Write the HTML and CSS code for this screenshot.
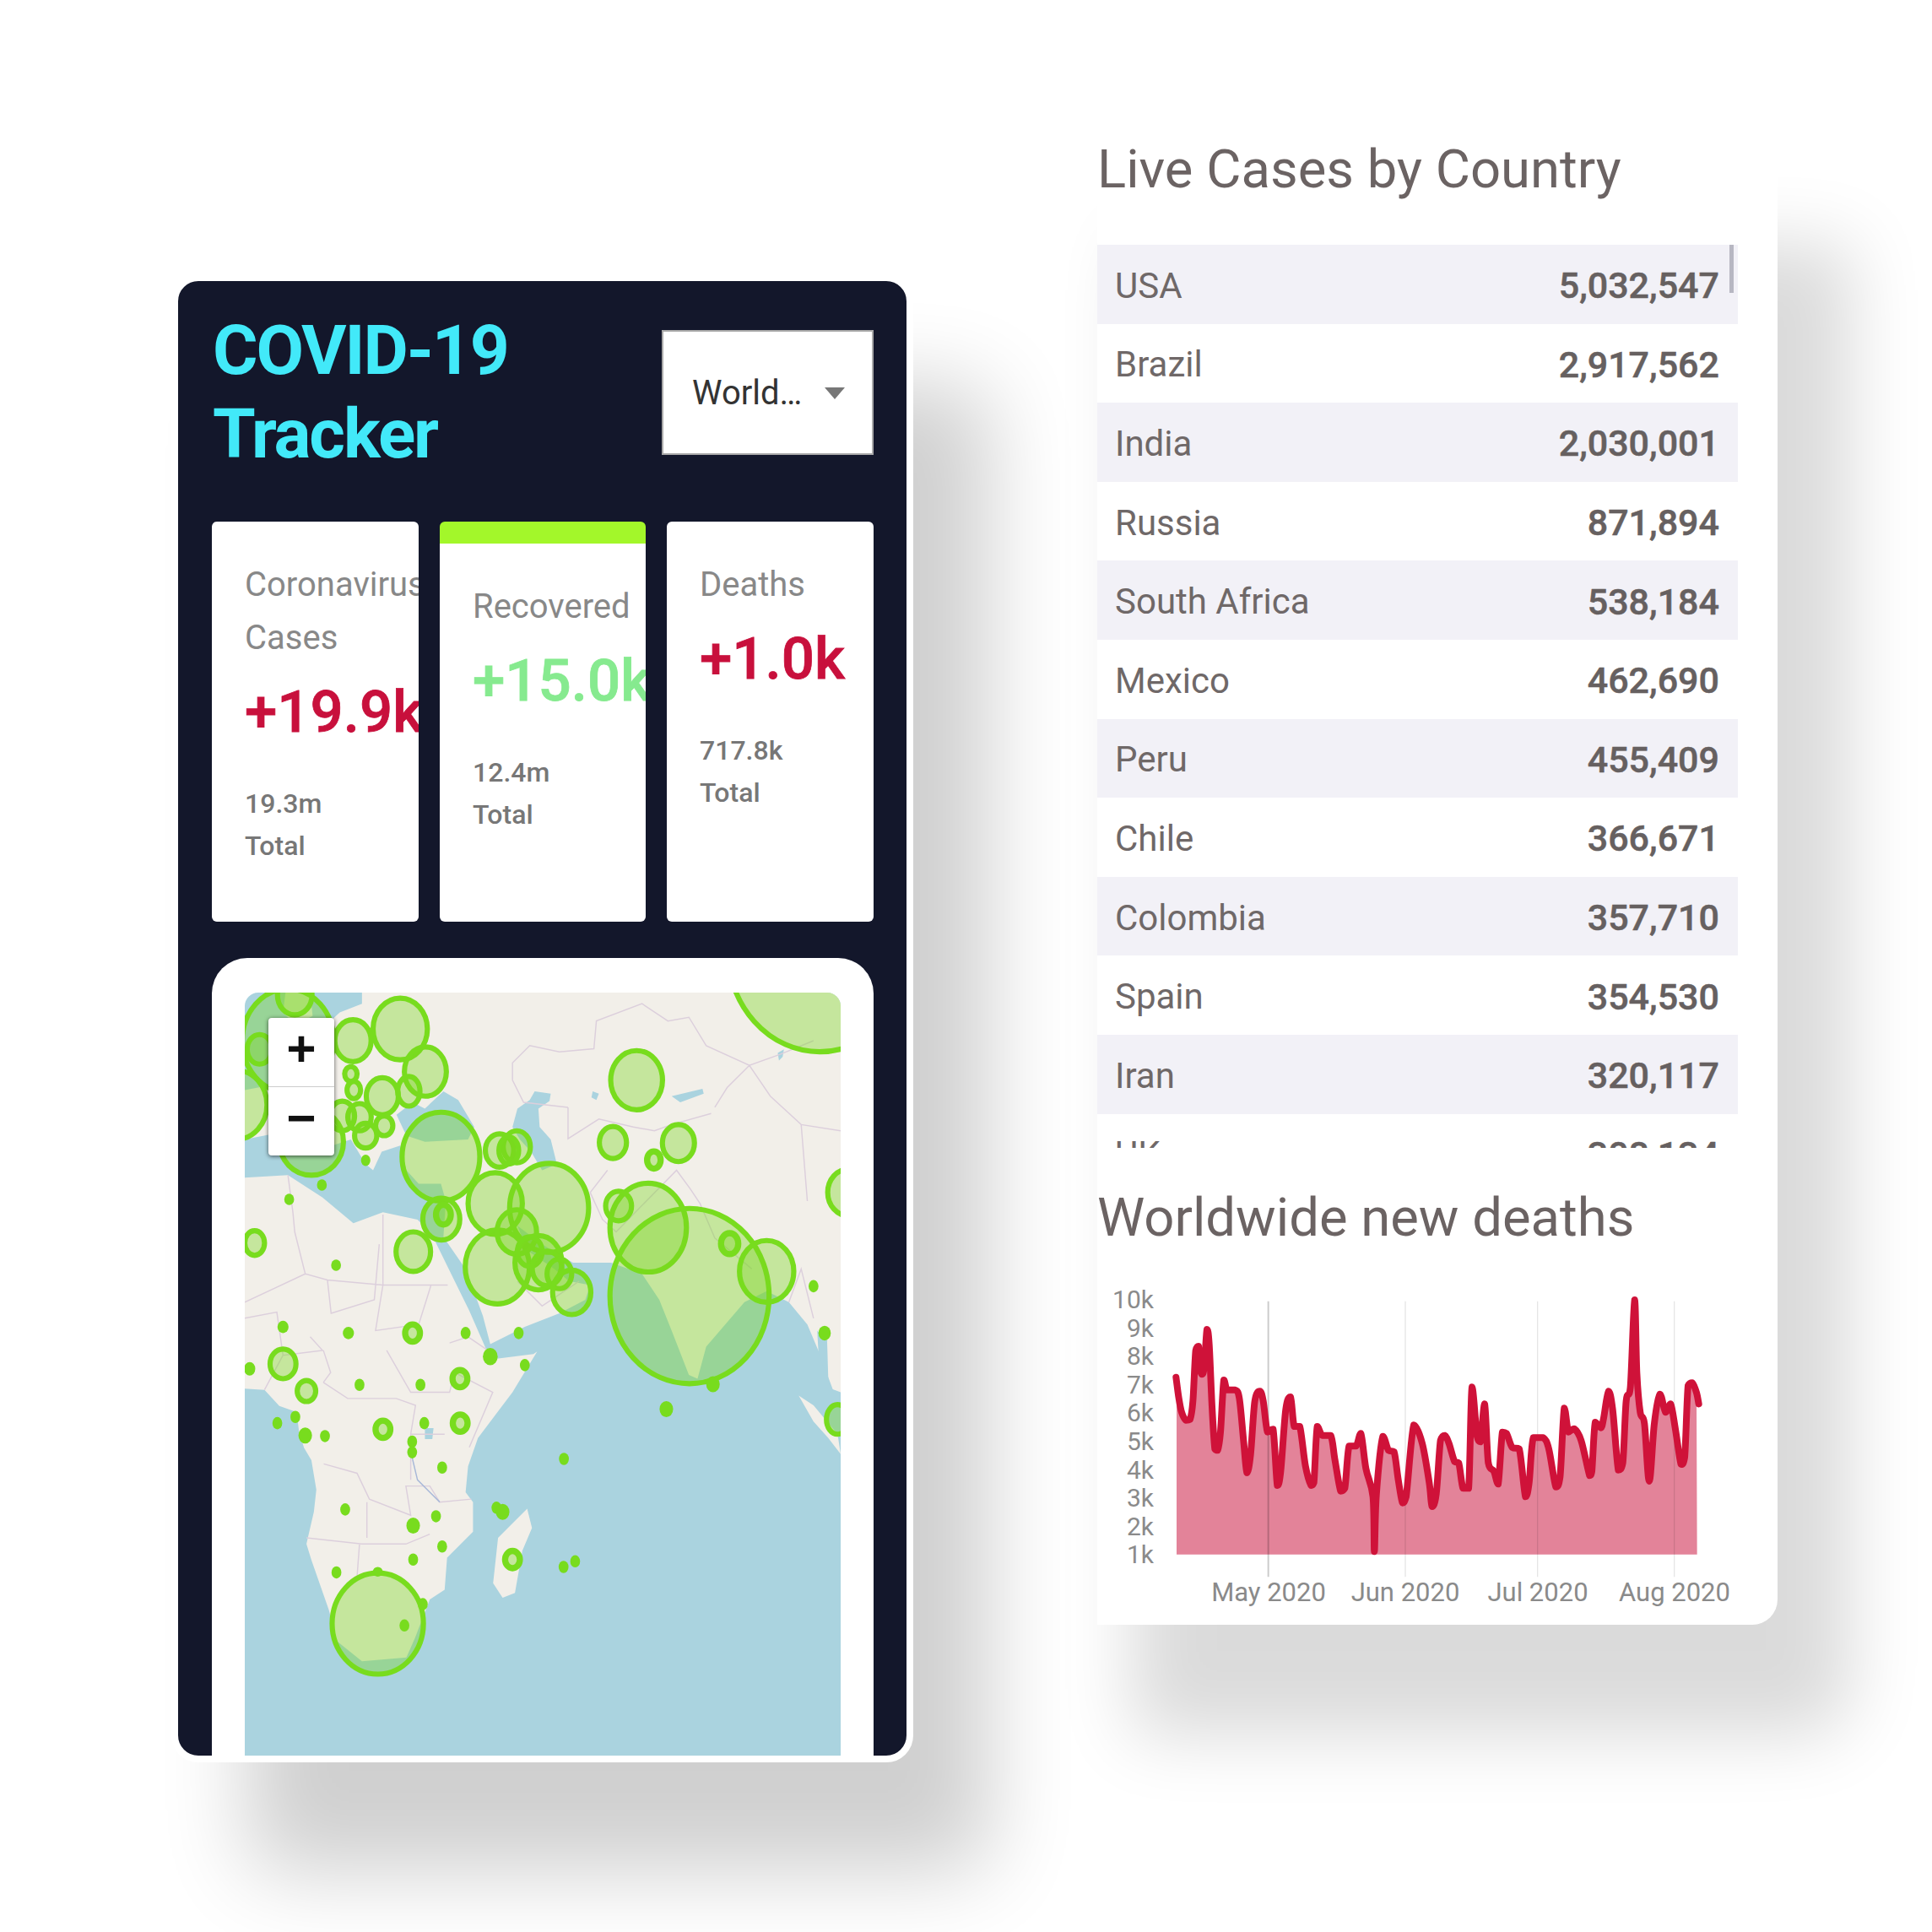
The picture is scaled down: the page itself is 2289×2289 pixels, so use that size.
FILE: index.html
```html
<!DOCTYPE html>
<html lang="en">
<head>
<meta charset="utf-8">
<title>COVID-19 Tracker</title>
<link rel="stylesheet" href="styles.css">
</head>
<body>
<main class="stage">
  <section class="tracker">
    <header class="tracker-head">
      <h1 class="brand">COVID-19<br>Tracker</h1>
      <div class="select"><span>World…</span><i class="caret"></i></div>
    </header>
    <div class="cards">
      <article class="card">
        <h3 class="card-label">Coronavirus Cases</h3>
        <p class="card-value red">+19.9k</p>
        <p class="card-total">19.3m<br>Total</p>
      </article>
      <article class="card active">
        <h3 class="card-label">Recovered</h3>
        <p class="card-value green">+15.0k</p>
        <p class="card-total">12.4m<br>Total</p>
      </article>
      <article class="card">
        <h3 class="card-label">Deaths</h3>
        <p class="card-value red">+1.0k</p>
        <p class="card-total">717.8k<br>Total</p>
      </article>
    </div>
    <div class="map-card">
      <div class="map">
        <svg class="map-svg" viewBox="199 806 483 618.5" preserveAspectRatio="none" xmlns="http://www.w3.org/2000/svg">
          <rect class="water" x="199" y="806" width="483" height="619"/>
          <path class="land" d="M294 806L682 806L682 1130L675.6 1127.5L663.8 1096L655 1075L640 1057L622 1048L604 1057L573 1093L566 1119L559 1116L545 1080L535 1055L521 1034L496 1025L465 1025L440 1010L420 995L428 1015L450 1030L462 1040L479 1043L475 1055L454 1066L426 1077L398 1091L392 1068L378 1030L360 1004L362 975L358 961L340 961L330 950L325 930L310 935L303 950L297 945L285 925L270 930L240 920L225 920L199 925L199 885L225 880L232 860L250 855L262 835L276 822L294 815Z"/>
          <path class="land" d="M232 806L252 806L254 825L240 832L230 822Z"/>
          <path class="land" d="M199 956L234 954L262 972L287 993L311 984L339 990L349 1000L353 1007L381 1064L395 1096L402 1103L433 1099L436 1097L416 1130L388 1167L380 1190L378 1211L384 1219L384 1243L363 1264L361 1290L349 1298L337 1329L330 1345L294 1348L274 1332L267 1306L253 1266L249 1253L255 1227L257 1209L253 1185L247 1175L243 1162L241 1146L227 1141L215 1128L199 1127Z"/>
          <path class="land" d="M427.9 1224.4L431.8 1240L424 1258.5L418 1292.6L408 1296.5L400.3 1284.7L404.3 1248L420 1232.3Z"/>
          <path class="land" d="M648 1132.7L660 1140.6L679.5 1164L682 1180L671.7 1166.8L660 1153.7Z"/>
          <path class="water" d="M345 900L360 886L372 893L385 915L380 925L345 927L330 922L322 905L335 895Z"/>
          <path class="water" d="M434 886L447 888L446 894L437 900L438 915L447 925L452 945L440 950L431 935L422 925L416 915L420 900L430 893Z"/>
          <path class="water" d="M663 1080L671 1088L672 1120L664 1098Z"/>
          <path class="water" d="M545 890L570 884L571 888L552 895ZM481 886L486 888L484 893L480 891ZM631 855L636 852L635 858L632 861ZM345 1159L352 1159L351 1168L345 1168Z"/>
          <path class="border" d="M416 877L416 863L430 849L454 854L482 851.5L484 829L521 815L542 829L559 826L573 849L608 865L633 856L660 845M608 865L590 883L580 899M608 865L625 890L650 913L682 918M461 899L461 924.5L486 908.5L514 915L531 918L545 913L577 904M416 877L425 895L461 899M493 950L479 968L489 990L500 1000L549 950L560 965L568 977L580 1005L610 1030M234 954L238 984L239.5 1000L248 1034L266 1039L311 1043L363.5 1043M311 986L311 1043M199 1057L248 1034M266 1039L269 1066L304 1055L308 1010M311 1043L305 1080L340 1075L350 1043M263 1188L290 1195.6L300 1216.6L333.5 1229.7L329.6 1206L349 1206L357 1219L382.6 1216.6M249 1248L294 1253L329.6 1253L349 1245M292 1253L290 1279.5M298 1219L298 1248M262.7 1122L282.4 1135L321.7 1135L337.4 1140.6L333.5 1164L333.5 1201M262.7 1096L268.6 1114L262.7 1122M314 1096L333.5 1130L365 1130L369 1114L400 1130L381 1174.6M333.5 1164L361 1164M199 1070L225 1065L230 1100L215 1128M230 1100L262 1096L252 1085M650 913L655 975M640 1057L650 1030L660 1070M396 1096L380 1085L365 1090M420 1040L440 1060L470 1040"/>
          <path class="river" d="M333.5 1178L339 1201L357 1219"/>
          <ellipse class="m" cx="665" cy="770" rx="75" ry="84"/>
          <ellipse class="m" cx="234" cy="845" rx="37" ry="42"/>
          <ellipse class="m" cx="192" cy="897" rx="25" ry="28"/>
          <ellipse class="m" cx="253" cy="927" rx="26" ry="27"/>
          <ellipse class="m" cx="239.5" cy="808" rx="14" ry="16"/>
          <ellipse class="m" cx="211" cy="852" rx="10" ry="12"/>
          <ellipse class="m" cx="516.6" cy="877" rx="21" ry="24"/>
          <ellipse class="m" cx="325" cy="835.5" rx="22" ry="25"/>
          <ellipse class="m" cx="286.7" cy="845" rx="14.7" ry="17"/>
          <ellipse class="m" cx="345.4" cy="870" rx="17" ry="20"/>
          <ellipse class="m" cx="310.5" cy="890" rx="13" ry="15"/>
          <ellipse class="m" cx="332" cy="886" rx="9" ry="12"/>
          <ellipse class="m" cx="285" cy="872" rx="5" ry="6"/>
          <ellipse class="m" cx="287.4" cy="885" rx="5.5" ry="7"/>
          <ellipse class="m" cx="292" cy="907" rx="9.5" ry="11"/>
          <ellipse class="m" cx="312" cy="914" rx="7" ry="8"/>
          <ellipse class="m" cx="297" cy="922" rx="9" ry="10"/>
          <ellipse class="m" cx="278" cy="906" rx="10" ry="12"/>
          <ellipse class="m" cx="358" cy="939" rx="31.5" ry="36"/>
          <ellipse class="m" cx="405.5" cy="934" rx="11.5" ry="13.5"/>
          <ellipse class="m" cx="419.5" cy="931" rx="11" ry="13"/>
          <ellipse class="m" cx="413" cy="934" rx="8" ry="11"/>
          <ellipse class="m" cx="550.5" cy="928" rx="13" ry="15"/>
          <ellipse class="m" cx="497.4" cy="927.5" rx="11" ry="13"/>
          <ellipse class="r" cx="530.6" cy="941.7" rx="5.5" ry="7"/>
          <ellipse class="m" cx="688.5" cy="968" rx="17" ry="19"/>
          <ellipse class="m" cx="445.7" cy="980.5" rx="32" ry="36"/>
          <ellipse class="m" cx="402" cy="977" rx="22" ry="25"/>
          <ellipse class="m" cx="358.3" cy="989.6" rx="15" ry="17"/>
          <ellipse class="r" cx="360" cy="986" rx="6" ry="8"/>
          <ellipse class="m" cx="403.7" cy="1028.4" rx="26" ry="30"/>
          <ellipse class="m" cx="419.5" cy="1000" rx="16" ry="18"/>
          <ellipse class="m" cx="437" cy="1025" rx="19" ry="22"/>
          <ellipse class="m" cx="430" cy="1016" rx="10" ry="12"/>
          <ellipse class="m" cx="444" cy="1029.6" rx="12" ry="14"/>
          <ellipse class="m" cx="454" cy="1034" rx="10" ry="12"/>
          <ellipse class="m" cx="464" cy="1049" rx="15.5" ry="18"/>
          <ellipse class="m" cx="335.6" cy="1016" rx="14" ry="16"/>
          <ellipse class="m" cx="207" cy="1009" rx="8" ry="10"/>
          <ellipse class="m" cx="526" cy="996.5" rx="31" ry="36"/>
          <ellipse class="m" cx="502" cy="979" rx="10.5" ry="12"/>
          <ellipse class="m" cx="559.5" cy="1052" rx="64.5" ry="71"/>
          <ellipse class="r" cx="592" cy="1009.5" rx="7" ry="8.5"/>
          <ellipse class="m" cx="622" cy="1032" rx="22" ry="25"/>
          <ellipse class="m" cx="306.8" cy="1317.5" rx="37" ry="41"/>
          <ellipse class="m" cx="230" cy="1107" rx="10.5" ry="12"/>
          <ellipse class="m" cx="249" cy="1129" rx="7.5" ry="8.5"/>
          <ellipse class="m" cx="679.5" cy="1152" rx="9" ry="12"/>
          <ellipse class="r" cx="335" cy="1082" rx="6" ry="7"/>
          <ellipse class="r" cx="373.4" cy="1119" rx="6" ry="7"/>
          <ellipse class="r" cx="311" cy="1160" rx="6" ry="7"/>
          <ellipse class="r" cx="373.6" cy="1155" rx="6" ry="7"/>
          <ellipse class="r" cx="416" cy="1265.6" rx="6" ry="7"/>
          <g class="dots">
            <ellipse cx="235" cy="973.6" rx="4" ry="4.6"/><ellipse cx="261.5" cy="962" rx="4" ry="4.6"/><ellipse cx="273" cy="1027" rx="4" ry="4.6"/><ellipse cx="230" cy="1077" rx="4.5" ry="5"/><ellipse cx="283" cy="1082" rx="4.5" ry="5"/><ellipse cx="378" cy="1082" rx="4" ry="5"/><ellipse cx="421" cy="1082" rx="4" ry="5"/><ellipse cx="398" cy="1101" rx="6" ry="7"/><ellipse cx="426" cy="1108" rx="4" ry="5"/><ellipse cx="660" cy="1044" rx="4" ry="5"/><ellipse cx="669" cy="1082" rx="5" ry="6"/><ellipse cx="203" cy="1111" rx="4.5" ry="5.5"/><ellipse cx="297" cy="942" rx="3.8" ry="4.6"/><ellipse cx="292" cy="1124" rx="4" ry="5"/><ellipse cx="341.4" cy="1124" rx="4" ry="5"/><ellipse cx="225.4" cy="1155" rx="4" ry="5"/><ellipse cx="240" cy="1150" rx="4" ry="5"/><ellipse cx="248" cy="1165" rx="5.5" ry="6.5"/><ellipse cx="264" cy="1165.5" rx="4" ry="5"/><ellipse cx="344.5" cy="1155" rx="4" ry="5"/><ellipse cx="334.7" cy="1170" rx="4" ry="5"/><ellipse cx="334.7" cy="1178.6" rx="4" ry="5"/><ellipse cx="359" cy="1191" rx="4" ry="5"/><ellipse cx="280.4" cy="1225" rx="4" ry="5"/><ellipse cx="354" cy="1230.5" rx="4" ry="5"/><ellipse cx="335.5" cy="1238" rx="5.5" ry="6.5"/><ellipse cx="403" cy="1223.6" rx="4" ry="5"/><ellipse cx="408" cy="1227" rx="5.5" ry="6.5"/><ellipse cx="359" cy="1255" rx="4" ry="5"/><ellipse cx="335.5" cy="1265.6" rx="4" ry="5"/><ellipse cx="273.3" cy="1276" rx="4" ry="5"/><ellipse cx="457.4" cy="1271.6" rx="4" ry="5"/><ellipse cx="466.8" cy="1267" rx="4" ry="5"/><ellipse cx="457.7" cy="1184" rx="4" ry="5"/><ellipse cx="540.7" cy="1143.7" rx="5.5" ry="6.5"/><ellipse cx="578.5" cy="1123.5" rx="5.5" ry="6.5"/><ellipse cx="328.4" cy="1319" rx="4" ry="5"/><ellipse cx="343.3" cy="1301.8" rx="4" ry="5"/><ellipse cx="306.8" cy="1275.5" rx="4" ry="4"/>
          </g>
        </svg>
        <div class="zoom">
          <span class="zoom-btn">+</span>
          <span class="zoom-btn">−</span>
        </div>
      </div>
    </div>
  </section>

  <section class="live">
    <h2 class="live-title first-title">Live Cases by Country</h2>
    <div class="table">
      <div class="row"><span>USA</span><b>5,032,547</b></div>
      <div class="row"><span>Brazil</span><b>2,917,562</b></div>
      <div class="row"><span>India</span><b>2,030,001</b></div>
      <div class="row"><span>Russia</span><b>871,894</b></div>
      <div class="row"><span>South Africa</span><b>538,184</b></div>
      <div class="row"><span>Mexico</span><b>462,690</b></div>
      <div class="row"><span>Peru</span><b>455,409</b></div>
      <div class="row"><span>Chile</span><b>366,671</b></div>
      <div class="row"><span>Colombia</span><b>357,710</b></div>
      <div class="row"><span>Spain</span><b>354,530</b></div>
      <div class="row"><span>Iran</span><b>320,117</b></div>
      <div class="row"><span>UK</span><b>308,134</b></div>
      <i class="thumb"></i>
    </div>
    <h2 class="live-title chart-title">Worldwide new deaths</h2>
    <svg class="chart" viewBox="1300 1492 806 433" xmlns="http://www.w3.org/2000/svg">
      <g class="ylabels">
        <text x="1367" y="1550">10k</text><text x="1367" y="1583.6">9k</text><text x="1367" y="1617.2">8k</text><text x="1367" y="1650.8">7k</text><text x="1367" y="1684.4">6k</text><text x="1367" y="1718">5k</text><text x="1367" y="1751.6">4k</text><text x="1367" y="1785.2">3k</text><text x="1367" y="1818.8">2k</text><text x="1367" y="1852.4">1k</text>
      </g>
      <g transform="translate(1380 1510) scale(.33333)">
        <path class="area" d="M42 995L42 365L50 440L60 490L75 518L90 515L100 450L110 270L120 255L125 330L132 355L140 330L150 195L158 250L168 470L178 620L188 625L198 560L210 375L222 410L250 410L265 440L280 590L292 705L305 640L320 450L338 415L350 450L365 560L385 550L400 750L412 700L430 480L447 435L460 540L480 540L500 680L520 750L530 740L542 540L560 572L590 572L605 660L625 770L640 760L655 610L680 610L697 565L715 690L740 790L745 985L752 785L775 575L795 625L815 630L830 730L845 812L858 790L885 535L915 600L940 740L950 825L965 780L980 590L995 572L1010 600L1030 665L1045 670L1060 760L1080 760L1092 400L1110 575L1122 595L1137 460L1150 670L1170 700L1185 745L1200 560L1215 565L1235 615L1260 620L1282 790L1295 740L1310 580L1345 580L1365 620L1390 755L1405 720L1420 475L1435 560L1455 548L1480 590L1510 715L1518 700L1530 525L1550 545L1560 510L1577 415L1592 480L1612 695L1628 670L1640 450L1655 400L1670 90L1678 350L1690 490L1705 530L1722 735L1740 530L1760 425L1780 490L1798 460L1815 550L1835 675L1848 650L1860 395L1875 385L1890 420L1892 995Z"/>
        <path class="grid dark" d="M368 95V1075"/>
        <path class="grid" d="M855 95V1075M1325 95V1075M1811 95V1075"/>
        <path class="line" d="M40 365L50 440L60 490L75 518L90 515L100 450L110 270L120 255L125 330L132 355L140 330L150 195L158 250L168 470L178 620L188 625L198 560L210 375L222 410L250 410L265 440L280 590L292 705L305 640L320 450L338 415L350 450L365 560L385 550L400 750L412 700L430 480L447 435L460 540L480 540L500 680L520 750L530 740L542 540L560 572L590 572L605 660L625 770L640 760L655 610L680 610L697 565L715 690L740 790L745 985L752 785L775 575L795 625L815 630L830 730L845 812L858 790L885 535L915 600L940 740L950 825L965 780L980 590L995 572L1010 600L1030 665L1045 670L1060 760L1080 760L1092 400L1110 575L1122 595L1137 460L1150 670L1170 700L1185 745L1200 560L1215 565L1235 615L1260 620L1282 790L1295 740L1310 580L1345 580L1365 620L1390 755L1405 720L1420 475L1435 560L1455 548L1480 590L1510 715L1518 700L1530 525L1550 545L1560 510L1577 415L1592 480L1612 695L1628 670L1640 450L1655 400L1670 90L1678 350L1690 490L1705 530L1722 735L1740 530L1760 425L1780 490L1798 460L1815 550L1835 675L1848 650L1860 395L1875 385L1890 420L1898 460"/>
      </g>
      <g class="xlabels">
        <text x="1503" y="1897">May 2020</text><text x="1665" y="1897">Jun 2020</text><text x="1822" y="1897">Jul 2020</text><text x="1984" y="1897">Aug 2020</text>
      </g>
    </svg>
  </section>
</main>
<script src="chart.js"></script>
</body>
</html>
```
FILE: styles.css
```css
* { box-sizing: border-box; }
html, body { margin: 0; background: #fff; }
body { font-family: Roboto, "Noto Sans", sans-serif; }

.stage {
  width: 2289px;
  height: 2289px;
  padding-left: 203px;
  display: flex;
  align-items: flex-start;
  overflow: hidden;
}

/* left window */
.tracker {
  flex: none;
  width: 879px;
  height: 1763px;
  margin-top: 325px;
  padding: 33px 39px 0 40px;
  background: #13172b;
  border: 8px solid #fff;
  border-radius: 32px;
  box-shadow: 90px 130px 100px rgba(0, 0, 0, .19);
  overflow: hidden;
  display: flex;
  flex-direction: column;
}
.tracker-head {
  display: flex;
  justify-content: space-between;
  align-items: center;
  padding-left: 1px;
}
.brand {
  margin: 0;
  font-size: 82px;
  letter-spacing: -2.1px;
  line-height: 99px;
  font-weight: 700;
  color: #42e9f9;
}
.select {
  width: 251px;
  height: 148px;
  background: #fff;
  border: 2px solid #a9a9a9;
  padding: 0 32px 0 34px;
  display: flex;
  align-items: center;
  justify-content: space-between;
  font-size: 40px;
  color: #333;
}
.caret {
  width: 0;
  height: 0;
  margin-top: 2px;
  border-left: 12px solid transparent;
  border-right: 12px solid transparent;
  border-top: 14px solid #777;
}
.cards {
  display: grid;
  grid-template-columns: 245px 244px 245px;
  column-gap: 25px;
  margin-top: 53.5px;
}
.card {
  height: 474px;
  background: #fff;
  border-radius: 6px;
  padding: 43px 39px 0;
  overflow: hidden;
}
.card.active { border-top: 26px solid #a3f72a; }
.card-label {
  margin: 0;
  font-size: 40px;
  line-height: 63px;
  font-weight: 400;
  color: #888;
}
.card-value {
  margin: 12px 0 0;
  font-size: 69px;
  line-height: 90px;
  font-weight: 500;
  white-space: nowrap;
  -webkit-text-stroke: .8px currentColor;
}
.red { color: #c8103c; }
.green { color: #86ea8f; }
.card-total {
  margin: 38px 0 0;
  font-size: 32px;
  line-height: 50px;
  font-weight: 500;
  color: #777;
}
.map-card {
  flex: 1;
  margin-top: 43px;
  background: #fff;
  border-radius: 42px 42px 0 0;
  padding: 41.5px 39px 0;
  min-height: 0;
}
.map {
  position: relative;
  height: 100%;
  overflow: hidden;
  border-radius: 16px 16px 0 0;
}
.map-svg { display: block; width: 100%; height: 100%; }
.water { fill: #aad3df; }
.land { fill: #f2efe9; }
.border { fill: none; stroke: #dccfdc; stroke-width: 1; }
.river { fill: none; stroke: #a8b8d8; stroke-width: 1; }
.m, .r { stroke: #78dc1e; fill: #7ad820; fill-opacity: .375; }
.m { stroke-width: 4.2; }
.r { stroke-width: 5; }
.dots { fill: #78dc1e; }
.zoom {
  position: absolute;
  left: 28px;
  top: 30px;
  width: 78px;
  height: 163px;
  background: #fff;
  border-radius: 4px;
  box-shadow: 0 1px 5px rgba(0, 0, 0, .65);
  display: flex;
  flex-direction: column;
}
.zoom-btn {
  flex: 1;
  display: flex;
  align-items: center;
  justify-content: center;
  font-family: "Liberation Mono", monospace;
  font-weight: 700;
  font-size: 60px;
  color: #111;
}
.zoom-btn:first-child { border-bottom: 1px solid #ccc; }

/* right window */
.live {
  flex: none;
  width: 806px;
  height: 1723px;
  margin-top: 202px;
  margin-left: 218px;
  background: #fff;
  border-radius: 0 0 30px 0;
  box-shadow: 64px 109px 84px 23px rgba(0, 0, 0, .145);
}
.live-title {
  margin: 0;
  height: 100px;
  font-size: 63.4px;
  line-height: 100px;
  font-weight: 400;
  color: #6b6363;
  white-space: nowrap;
}
.first-title { margin-top: -52px; }
.table {
  position: relative;
  width: 759px;
  height: 1070px;
  margin-top: 40px;
  overflow: hidden;
}
.row {
  height: 93.6px;
  padding: 3px 22px 0 21px;
  display: flex;
  align-items: center;
  justify-content: space-between;
  font-size: 42px;
  color: #6f6868;
}
.row:nth-child(odd) { background: #f2f1f7; }
.row b {
  font-weight: 500;
  font-size: 43px;
  color: #666060;
  -webkit-text-stroke: .5px currentColor;
}
.thumb {
  position: absolute;
  right: 5px;
  top: 0;
  width: 5px;
  height: 57px;
  background: #b7b7c2;
}
.chart-title { margin-top: 32px; }
.chart { display: block; width: 806px; height: 433px; }
.ylabels text { font-size: 30px; fill: #8a8a8a; text-anchor: end; }
.xlabels text { font-size: 31px; fill: #8a8a8a; text-anchor: middle; }
.area { fill: #e38399; }
.line { fill: none; stroke: #cf1239; stroke-width: 24; stroke-linejoin: round; stroke-linecap: round; }
.grid { fill: none; stroke: #000; stroke-opacity: .1; stroke-width: 4; }
.grid.dark { stroke-opacity: .2; stroke-width: 6; }
```
FILE: chart.js
```js
// Redraws the chart's straight data segments as smooth curves.
(function () {
  function curve(pts) {
    var d = "";
    for (var i = 0; i < pts.length - 1; i++) {
      var p0 = pts[Math.max(i - 1, 0)];
      var p1 = pts[i];
      var p2 = pts[i + 1];
      var p3 = pts[Math.min(i + 2, pts.length - 1)];
      var lo = Math.min(p1[1], p2[1]);
      var hi = Math.max(p1[1], p2[1]);
      var c1y = Math.min(hi, Math.max(lo, p1[1] + (p2[1] - p0[1]) / 6));
      var c2y = Math.min(hi, Math.max(lo, p2[1] - (p3[1] - p1[1]) / 6));
      var c1x = p1[0] + (p2[0] - p0[0]) / 6;
      var c2x = p2[0] - (p3[0] - p1[0]) / 6;
      d += "C" + c1x + " " + c1y + " " + c2x + " " + c2y + " " + p2[0] + " " + p2[1];
    }
    return d;
  }

  function points(path) {
    var nums = path.getAttribute("d").match(/[\d.]+/g).map(Number);
    var pts = [];
    for (var i = 0; i < nums.length; i += 2) pts.push([nums[i], nums[i + 1]]);
    return pts;
  }

  var line = document.querySelector(".line");
  var linePts = points(line);
  line.setAttribute("d", "M" + linePts[0].join(" ") + curve(linePts));

  var area = document.querySelector(".area");
  var areaPts = points(area);
  var upper = areaPts.slice(1, -1);
  var first = areaPts[0];
  var last = areaPts[areaPts.length - 1];
  area.setAttribute("d", "M" + first.join(" ") + "L" + upper[0].join(" ") + curve(upper) + "L" + last.join(" ") + "Z");
})();
```
